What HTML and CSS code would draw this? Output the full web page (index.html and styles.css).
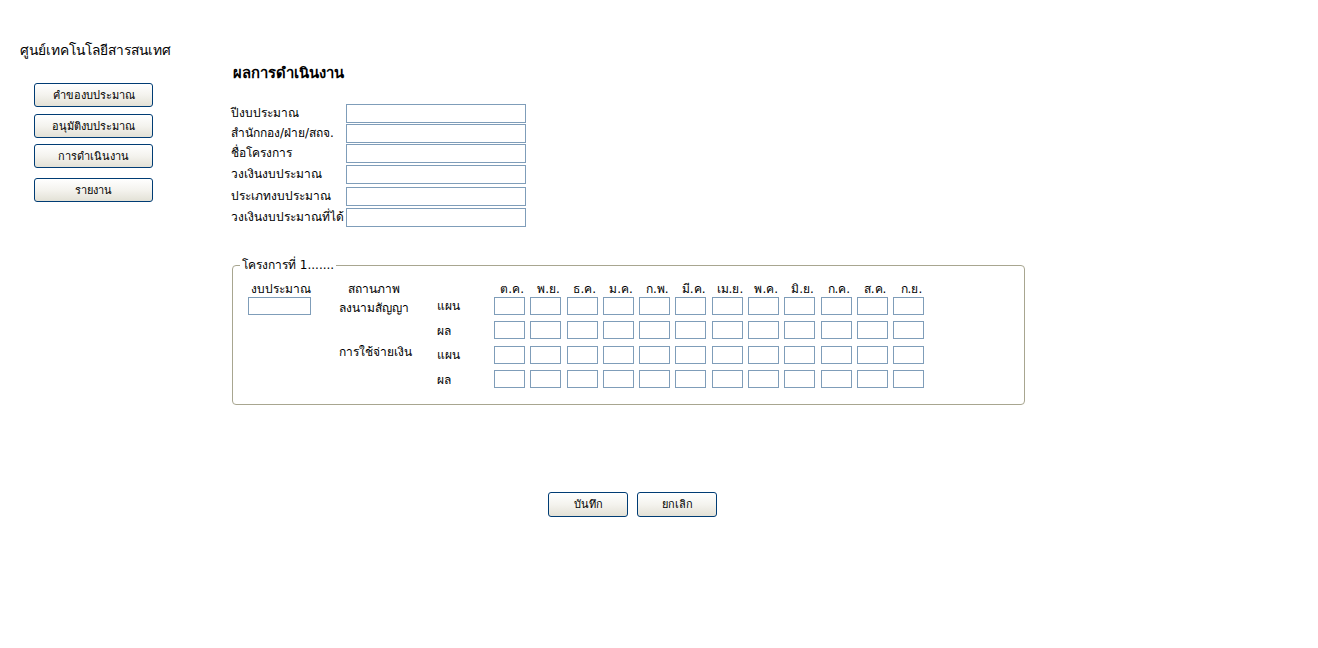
FILE: index.html
```html
<!DOCTYPE html>
<html lang="th">
<head>
  <meta charset="UTF-8">
  <title>ผลการดำเนินงาน</title>
  <link rel="stylesheet" href="styles.css">
</head>
<body>
  <div class="page">
    <div class="sidebar">
      <div class="site-title">ศูนย์เทคโนโลยีสารสนเทศ</div>
      <div class="menu">
        <button class="btn menu-btn menu-first">คำของบประมาณ</button>
        <button class="btn menu-btn">อนุมัติงบประมาณ</button>
        <button class="btn menu-btn">การดำเนินงาน</button>
        <button class="btn menu-btn menu-last">รายงาน</button>
      </div>
    </div>
    <div class="main">
      <h1 class="heading">ผลการดำเนินงาน</h1>
      <div class="info-form">
        <div class="form-row"><label>ปีงบประมาณ</label><input type="text" class="txt"></div>
        <div class="form-row"><label>สำนักกอง/ฝ่าย/สถจ.</label><input type="text" class="txt"></div>
        <div class="form-row"><label>ชื่อโครงการ</label><input type="text" class="txt"></div>
        <div class="form-row row-gap1"><label>วงเงินงบประมาณ</label><input type="text" class="txt"></div>
        <div class="form-row row-gap2"><label>ประเภทงบประมาณ</label><input type="text" class="txt"></div>
        <div class="form-row row-gap1"><label>วงเงินงบประมาณที่ได้</label><input type="text" class="txt"></div>
      </div>

      <fieldset class="project">
        <legend>โครงการที่ 1.......</legend>
        <div class="plan-grid">
          <div class="hd hd-budget">งบประมาณ</div>
          <div class="hd hd-status">สถานภาพ</div>
          <div class="hd"></div>
          <div class="hd">ต.ค.</div>
          <div class="hd">พ.ย.</div>
          <div class="hd">ธ.ค.</div>
          <div class="hd">ม.ค.</div>
          <div class="hd">ก.พ.</div>
          <div class="hd">มี.ค.</div>
          <div class="hd">เม.ย.</div>
          <div class="hd">พ.ค.</div>
          <div class="hd">มิ.ย.</div>
          <div class="hd">ก.ค.</div>
          <div class="hd">ส.ค.</div>
          <div class="hd">ก.ย.</div>

          <div class="cell"><input type="text" class="txt budget-input"></div>
          <div class="cell status">ลงนามสัญญา</div>
          <div class="cell kind">แผน</div>
          <div class="cell"><input class="txt m"></div><div class="cell"><input class="txt m"></div><div class="cell"><input class="txt m"></div><div class="cell"><input class="txt m"></div><div class="cell"><input class="txt m"></div><div class="cell"><input class="txt m"></div><div class="cell"><input class="txt m"></div><div class="cell"><input class="txt m"></div><div class="cell"><input class="txt m"></div><div class="cell"><input class="txt m"></div><div class="cell"><input class="txt m"></div><div class="cell"><input class="txt m"></div>

          <div class="cell"></div>
          <div class="cell"></div>
          <div class="cell kind">ผล</div>
          <div class="cell"><input class="txt m"></div><div class="cell"><input class="txt m"></div><div class="cell"><input class="txt m"></div><div class="cell"><input class="txt m"></div><div class="cell"><input class="txt m"></div><div class="cell"><input class="txt m"></div><div class="cell"><input class="txt m"></div><div class="cell"><input class="txt m"></div><div class="cell"><input class="txt m"></div><div class="cell"><input class="txt m"></div><div class="cell"><input class="txt m"></div><div class="cell"><input class="txt m"></div>

          <div class="cell"></div>
          <div class="cell status status-up">การใช้จ่ายเงิน</div>
          <div class="cell kind">แผน</div>
          <div class="cell"><input class="txt m"></div><div class="cell"><input class="txt m"></div><div class="cell"><input class="txt m"></div><div class="cell"><input class="txt m"></div><div class="cell"><input class="txt m"></div><div class="cell"><input class="txt m"></div><div class="cell"><input class="txt m"></div><div class="cell"><input class="txt m"></div><div class="cell"><input class="txt m"></div><div class="cell"><input class="txt m"></div><div class="cell"><input class="txt m"></div><div class="cell"><input class="txt m"></div>

          <div class="cell"></div>
          <div class="cell"></div>
          <div class="cell kind">ผล</div>
          <div class="cell"><input class="txt m"></div><div class="cell"><input class="txt m"></div><div class="cell"><input class="txt m"></div><div class="cell"><input class="txt m"></div><div class="cell"><input class="txt m"></div><div class="cell"><input class="txt m"></div><div class="cell"><input class="txt m"></div><div class="cell"><input class="txt m"></div><div class="cell"><input class="txt m"></div><div class="cell"><input class="txt m"></div><div class="cell"><input class="txt m"></div><div class="cell"><input class="txt m"></div>
        </div>
      </fieldset>

      <div class="actions">
        <button class="btn action-btn">บันทึก</button>
        <button class="btn action-btn">ยกเลิก</button>
      </div>
    </div>
  </div>
</body>
</html>
```

FILE: styles.css
```css
body {
  margin: 0;
  padding: 0;
  background: #fff;
  color: #000;
  font-family: Tahoma, 'DejaVu Sans', 'Noto Sans', sans-serif;
  font-size: 12px;
}
.page {
  display: flex;
  align-items: flex-start;
}
/* left menu */
.sidebar {
  width: 231px;
  flex-shrink: 0;
  padding-top: 41px;
}
.site-title {
  font-size: 13.8px;
  padding-left: 20px;
  line-height: 18px;
}
.menu {
  display: flex;
  flex-direction: column;
  gap: 6px;
  padding-left: 34px;
  padding-top: 24px;
}
.btn {
  font-family: Tahoma, 'DejaVu Sans', 'Noto Sans', sans-serif;
  font-size: 11px;
  color: #000;
  border: 1px solid #003c74;
  border-radius: 3px;
  background: linear-gradient(to bottom, #ffffff 0%, #f4f3ee 50%, #e3e1d6 100%);
  padding: 0;
  cursor: pointer;
}
.menu-btn {
  width: 119px;
  height: 24px;
}
.menu-first {
  margin-bottom: 1px;
}
.menu-last {
  margin-top: 4px;
}
/* main area */
.main {
  width: 803px;
  padding-top: 64px;
}
.heading {
  font-size: 14.8px;
  font-weight: bold;
  margin: 0 0 22px 2px;
  line-height: 18px;
}
.info-form {
  display: flex;
  flex-direction: column;
  gap: 1px;
}
.form-row {
  display: flex;
  align-items: center;
}
.row-gap1 {
  margin-top: 1px;
}
.row-gap2 {
  margin-top: 2px;
}
.form-row label {
  width: 115px;
  line-height: 19px;
  white-space: nowrap;
}
.txt {
  box-sizing: border-box;
  border: 1px solid #7f9db9;
  background: #fff;
  padding: 0 2px;
  margin: 0;
  font-size: 12px;
}
.form-row .txt {
  width: 180px;
  height: 19px;
}
/* project fieldset */
.project {
  margin: 30px 0 0 1px;
  width: 793px;
  box-sizing: border-box;
  border: 1px solid #a8a690;
  border-radius: 4px;
  padding: 0 0 12px 0;
}
.project legend {
  padding: 0 2px;
  margin-left: 7px;
  font-size: 12px;
  line-height: 16px;
}
.plan-grid {
  display: grid;
  grid-template-columns: 91px 98px 57px repeat(12, 36.3px);
  grid-template-rows: 7.5px repeat(4, 24.5px);
  padding-left: 15px;
  padding-top: 13px;
}
.hd {
  text-align: center;
  line-height: 7.5px;
  white-space: nowrap;
}
.hd-budget {
  text-align: left;
  padding-left: 3px;
}
.hd-status {
  text-align: left;
  padding-left: 9px;
}
.cell {
  display: flex;
  align-items: center;
  white-space: nowrap;
}
.status {
  padding-top: 3px;
}
.status-up {
  padding-top: 0;
  margin-top: -7px;
}
.budget-input {
  width: 63px;
  height: 18px;
}
.txt.m {
  width: 31px;
  height: 18px;
}
/* bottom buttons */
.actions {
  display: flex;
  justify-content: center;
  gap: 9px;
  margin-top: 87px;
}
.action-btn {
  width: 80px;
  height: 25px;
}
```
